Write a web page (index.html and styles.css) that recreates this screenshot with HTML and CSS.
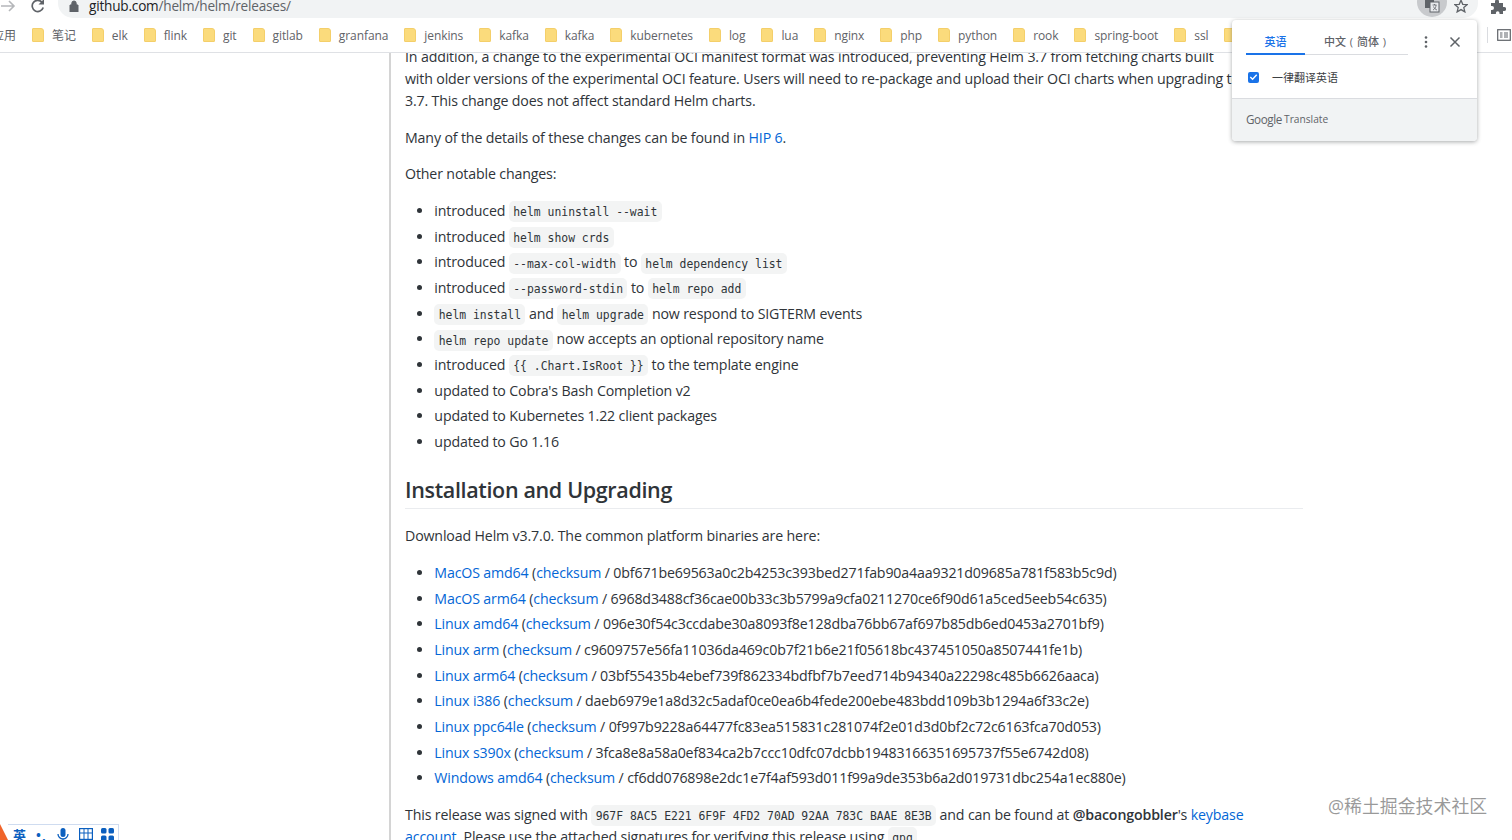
FILE: index.html
```html
<!DOCTYPE html>
<html lang="en">
<head>
<meta charset="utf-8">
<title>Releases · helm/helm</title>
<link rel="stylesheet" href="styles.css">
</head>
<body>
<header class="chrome">
  <div class="toolbar">
    <svg class="nav-back" width="16" height="16" viewBox="0 0 16 16"><path d="M1 8h13M9 3l5 5-5 5" fill="none" stroke="#b5b7ba" stroke-width="1.6"/></svg>
    <svg class="nav-reload" width="16" height="16" viewBox="0 0 16 16"><path d="M13.2 9.5A5.6 5.6 0 1 1 12 4.2" fill="none" stroke="#5f6368" stroke-width="1.7"/><path d="M14 1v5.5H8.500z" fill="#5f6368"/></svg>
    <div class="omnibox">
      <svg class="lock" width="10" height="12" viewBox="0 0 10 12"><path d="M1 5h8v7H1zM2.800 5V3.200a2.200 2.200 0 0 1 4.400 0V5" fill="#5f6368" stroke="#5f6368" stroke-width="1"/></svg>
      <span class="url"><b>github.com</b>/helm/helm/releases/</span>
      <span class="translate-btn">
        <svg width="16" height="16" viewBox="0 0 16 16"><rect x="1" y="1" width="9" height="10" fill="#5f6368"/><rect x="6" y="5" width="9" height="10" fill="#e8eaed" stroke="#5f6368"/><path d="M8.500 8h4M10.500 7v1M9 13c2 -1 3 -3 3 -5M9.500 9.500c.5 1.500 2 3 3.500 3.500" fill="none" stroke="#5f6368" stroke-width=".8"/></svg>
      </span>
      <svg class="star" width="14" height="14" viewBox="0 0 16 16"><path d="M8 1.500l2 4.600 5 .4-3.800 3.300 1.200 4.900L8 12.100l-4.400 2.600 1.200-4.900L1 6.500l5-.4z" fill="none" stroke="#5f6368" stroke-width="1.500"/></svg>
    </div>
    <svg class="puzzle" width="16" height="16" viewBox="0 0 16 16"><path d="M1 5h4V3.500a2 2 0 0 1 4 0V5h4v4h1.200a2 2 0 0 1 0 4H13v3H9.500v-1a1.800 1.800 0 0 0-3.600 0v1H1v-4h1a2 2 0 0 0 0-4H1z" fill="#5f6368"/></svg>
  </div>
  <nav class="bookmarks">
    <span class="apps">应用</span>
    <a class="bm"><i></i>笔记</a>
    <a class="bm"><i></i>elk</a>
    <a class="bm"><i></i>flink</a>
    <a class="bm"><i></i>git</a>
    <a class="bm"><i></i>gitlab</a>
    <a class="bm"><i></i>granfana</a>
    <a class="bm"><i></i>jenkins</a>
    <a class="bm"><i></i>kafka</a>
    <a class="bm"><i></i>kafka</a>
    <a class="bm"><i></i>kubernetes</a>
    <a class="bm"><i></i>log</a>
    <a class="bm"><i></i>lua</a>
    <a class="bm"><i></i>nginx</a>
    <a class="bm"><i></i>php</a>
    <a class="bm"><i></i>python</a>
    <a class="bm"><i></i>rook</a>
    <a class="bm"><i></i>spring-boot</a>
    <a class="bm"><i></i>ssl</a>
    <a class="bm"><i></i></a>
    <span class="bm-end">
      <span class="bm-sep"></span>
      <svg width="14" height="14" viewBox="0 0 14 14"><rect x=".7" y="1.700" width="12.600" height="10.600" fill="none" stroke="#5f6368" stroke-width="1.200"/><path d="M3 5h2.500M3 7h2.500M3 9h2.500M7 5h4M7 7h4M7 9h4" stroke="#5f6368"/></svg>
    </span>
  </nav>
</header>

<div class="page">
  <aside class="side"></aside>
  <main class="markdown">
    <p class="first">In addition, a change to the experimental OCI manifest format was introduced, preventing Helm 3.7 from fetching charts built<br>
    with older versions of the experimental OCI feature. Users will need to re-package and upload their OCI charts when upgrading to Helm<br>
    3.7. This change does not affect standard Helm charts.</p>
    <p>Many of the details of these changes can be found in <a href="#">HIP 6</a>.</p>
    <p>Other notable changes:</p>
    <ul>
      <li>introduced <code>helm uninstall --wait</code></li>
      <li>introduced <code>helm show crds</code></li>
      <li>introduced <code>--max-col-width</code> to <code>helm dependency list</code></li>
      <li>introduced <code>--password-stdin</code> to <code>helm repo add</code></li>
      <li><code>helm install</code> and <code>helm upgrade</code> now respond to SIGTERM events</li>
      <li><code>helm repo update</code> now accepts an optional repository name</li>
      <li>introduced <code>{{ .Chart.IsRoot }}</code> to the template engine</li>
      <li>updated to Cobra's Bash Completion v2</li>
      <li>updated to Kubernetes 1.22 client packages</li>
      <li>updated to Go 1.16</li>
    </ul>
    <h2>Installation and Upgrading</h2>
    <p>Download Helm v3.7.0. The common platform binaries are here:</p>
    <ul>
      <li><a href="#">MacOS amd64</a> (<a href="#">checksum</a> / 0bf671be69563a0c2b4253c393bed271fab90a4aa9321d09685a781f583b5c9d)</li>
      <li><a href="#">MacOS arm64</a> (<a href="#">checksum</a> / 6968d3488cf36cae00b33c3b5799a9cfa0211270ce6f90d61a5ced5eeb54c635)</li>
      <li><a href="#">Linux amd64</a> (<a href="#">checksum</a> / 096e30f54c3ccdabe30a8093f8e128dba76bb67af697b85db6ed0453a2701bf9)</li>
      <li><a href="#">Linux arm</a> (<a href="#">checksum</a> / c9609757e56fa11036da469c0b7f21b6e21f05618bc437451050a8507441fe1b)</li>
      <li><a href="#">Linux arm64</a> (<a href="#">checksum</a> / 03bf55435b4ebef739f862334bdfbf7b7eed714b94340a22298c485b6626aaca)</li>
      <li><a href="#">Linux i386</a> (<a href="#">checksum</a> / daeb6979e1a8d32c5adaf0ce0ea6b4fede200ebe483bdd109b3b1294a6f33c2e)</li>
      <li><a href="#">Linux ppc64le</a> (<a href="#">checksum</a> / 0f997b9228a64477fc83ea515831c281074f2e01d3d0bf2c72c6163fca70d053)</li>
      <li><a href="#">Linux s390x</a> (<a href="#">checksum</a> / 3fca8e8a58a0ef834ca2b7ccc10dfc07dcbb19483166351695737f55e6742d08)</li>
      <li><a href="#">Windows amd64</a> (<a href="#">checksum</a> / cf6dd076898e2dc1e7f4af593d011f99a9de353b6a2d019731dbc254a1ec880e)</li>
    </ul>
    <p>This release was signed with <code>967F 8AC5 E221 6F9F 4FD2 70AD 92AA 783C BAAE 8E3B</code> and can be found at <strong>@bacongobbler</strong>'s <a href="#">keybase</a><br>
    <a href="#">account</a>. Please use the attached signatures for verifying this release using <code>gpg</code>.</p>
  </main>
</div>

<section class="translate-pop">
  <div class="pop-head">
    <div class="pop-tabs">
      <span class="pop-tab active">英语</span>
      <span class="pop-tab">中文 ( 简体 )</span>
    </div>
    <svg class="pop-dots" width="4" height="14" viewBox="0 0 4 14"><circle cx="2" cy="2.500" r="1.300"/><circle cx="2" cy="7" r="1.300"/><circle cx="2" cy="11.500" r="1.300"/></svg>
    <svg class="pop-close" width="12" height="12" viewBox="0 0 12 12"><path d="M1.500 1.500l9 9M10.500 1.500l-9 9" stroke="#5f6368" stroke-width="1.500"/></svg>
  </div>
  <label class="pop-check">
    <span class="box"><svg width="12" height="12" viewBox="0 0 12 12"><path d="M2.500 6l2.500 2.500 4.500-5" fill="none" stroke="#fff" stroke-width="1.500"/></svg></span>
    <span>一律翻译英语</span>
  </label>
  <footer class="pop-foot"><span class="g">Google</span> <span>Translate</span></footer>
</section>

<div class="ime">
  <span class="ime-logo"></span>
  <span class="ime-bar">
    <span class="ime-en">英</span>
    <span class="ime-en ime-punct">•,</span>
    <svg width="12" height="14" viewBox="0 0 12 14"><rect x="3.500" y="0" width="5" height="9" rx="2.500" fill="#0b5fbf"/><path d="M1 6a5 5 0 0 0 10 0M6 11v3" fill="none" stroke="#0b5fbf" stroke-width="1.300"/></svg>
    <svg width="14" height="12" viewBox="0 0 14 12"><rect x=".6" y=".6" width="12.800" height="10.800" fill="none" stroke="#0b5fbf" stroke-width="1.200"/><path d="M5 1v10M9 1v10M1 5h12" stroke="#0b5fbf"/></svg>
    <svg width="13" height="13" viewBox="0 0 13 13"><rect width="5.500" height="5.500" rx="1.500" fill="#0b5fbf"/><rect x="7.500" width="5.500" height="5.500" rx="1.500" fill="#0b5fbf"/><rect y="7.500" width="5.500" height="5.500" rx="1.500" fill="#0b5fbf"/><rect x="7.500" y="7.500" width="5.500" height="5.500" rx="1.500" fill="#0b5fbf"/></svg>
  </span>
</div>

<div class="watermark">@稀土掘金技术社区</div>
</body>
</html>
```

FILE: styles.css
```css
* { box-sizing: border-box; }
html, body { height: 100%; }
body {
  margin: 0;
  overflow: hidden;
  background: #fff;
  color: #2f3439;
  font-family: "Open Sans", "Noto Sans CJK SC", sans-serif;
}

/* browser chrome */
.chrome {
  height: 53px;
  background: #fff;
  border-bottom: 1px solid #dfe1e5;
  position: relative;
  z-index: 2;
  overflow: hidden;
}
.toolbar {
  height: 18px;
  display: flex;
  align-items: flex-end;
  overflow: hidden;
}
.nav-back { margin: 0 0 4px 0; flex: none; }
.nav-reload { margin: 0 0 4px 14px; flex: none; }
.omnibox {
  flex: none;
  width: 1420px;
  height: 30px;
  margin-left: 12px;
  padding: 0 10px 0 11px;
  background: #f1f3f4;
  border-radius: 0 0 15px 15px;
  display: flex;
  align-items: flex-end;
}
.lock { margin-bottom: 6px; flex: none; }
.url {
  margin: 0 0 2px 10px;
  font-size: 13.6px;
  letter-spacing: -0.2px;
  line-height: 20px;
  color: #5f6368;
  flex: 1;
  white-space: nowrap;
}
.url b { font-weight: 400; color: #202124; }
.translate-btn {
  flex: none;
  width: 30px;
  height: 30px;
  margin-bottom: 1px;
  border-radius: 50%;
  background: #c8cacd;
  display: flex;
  align-items: flex-end;
  justify-content: center;
  padding-bottom: 4px;
}
.star { margin: 0 0 5px 7px; flex: none; }
.puzzle { margin: 0 0 4px 12px; flex: none; }

.bookmarks {
  height: 34px;
  display: flex;
  align-items: center;
  font-size: 12px;
  letter-spacing: -0.09px;
  color: #5f6368;
  white-space: nowrap;
  position: relative;
}
.apps { width: 32px; flex: none; text-indent: -8px; }
.bm { display: inline-flex; align-items: center; flex: none; margin-right: 16px; }
.bm i {
  width: 12px;
  height: 14px;
  margin-right: 8px;
  background: #fbdb7c;
  border: 1px solid #f4cf6a;
  border-radius: 1px 3px 1px 1px;
}
.bm-end {
  position: absolute;
  right: 0;
  top: 0;
  height: 34px;
  width: 25px;
  background: #fff;
  display: flex;
  align-items: center;
  gap: 9px;
}
.bm-sep { width: 1px; height: 16px; background: #dadce0; flex: none; }

/* page */
.page { display: flex; height: 787px; overflow: hidden; }
.side { flex: none; width: 391px; border-right: 2px solid #d4d4d4; }
.markdown {
  flex: none;
  width: 898px;
  margin: -7px 0 0 14px;
  font-size: 14.2px;
  line-height: 22px;
  letter-spacing: -0.15px;
  white-space: nowrap;
}
.markdown p { margin: 0 0 14.67px; }
.markdown a { color: #0366d6; text-decoration: none; }
.markdown strong { font-weight: 600; }
.markdown ul { margin: 0 0 14.67px; padding-left: 29.33px; }
.markdown li + li { margin-top: 3.67px; }
.markdown h2 {
  margin: 23px 0 16px;
  padding-bottom: 5px;
  border-bottom: 1px solid #eaecef;
  font-size: 21.5px;
  line-height: 27.5px;
  font-weight: 600;
  letter-spacing: -0.35px;
}
.markdown code {
  font-family: "DejaVu Sans Mono", "Liberation Mono", monospace;
  font-size: 11.4px;
  line-height: 1;
  letter-spacing: 0;
  padding: 3.5px 4.4px;
  background: rgba(27, 31, 35, 0.05);
  border-radius: 5px;
}

/* translate popup */
.translate-pop {
  position: absolute;
  left: 1232px;
  top: 20px;
  width: 245px;
  height: 121px;
  background: #fff;
  border-radius: 4px;
  box-shadow: 0 1px 4px rgba(60, 64, 67, 0.45);
  z-index: 3;
  display: flex;
  flex-direction: column;
  overflow: hidden;
}
.pop-head { display: flex; align-items: flex-start; padding: 14px 0 0 14px; height: 36px; flex: none; }
.pop-tabs { display: flex; width: 162px; height: 21px; border-bottom: 1px solid #dadce0; font-size: 11px; font-weight: 500; color: #5f6368; }
.pop-tab { text-align: center; line-height: 15px; width: 100px; white-space: nowrap; word-spacing: 1px; }
.pop-tab.active { width: 59px; color: #1a73e8; border-bottom: 2px solid #1a73e8; height: 21px; }
.pop-dots { fill: #5f6368; margin: 1px 0 0 16px; flex: none; }
.pop-close { margin: 2px 0 0 21px; flex: none; }
.pop-check {
  flex: 1;
  display: flex;
  align-items: center;
  padding: 0 0 0 16px;
  font-size: 11px;
  color: #3c4043;
}
.box {
  width: 11px;
  height: 11px;
  margin-right: 13px;
  background: #1a73e8;
  border-radius: 2px;
  display: flex;
  align-items: center;
  justify-content: center;
  flex: none;
}
.pop-foot {
  height: 43px;
  flex: none;
  display: flex;
  align-items: center;
  gap: 2px;
  padding: 0 0 2px 14px;
  background: #f1f3f4;
  border-top: 1px solid #dadce0;
  font-size: 10.2px;
  color: #5f6368;
}
.pop-foot .g { font-size: 11.7px; letter-spacing: -0.4px; }

/* IME bar */
.ime {
  position: absolute;
  left: 0;
  bottom: 0;
  height: 16px;
  display: flex;
  z-index: 3;
}
.ime-logo {
  width: 8px;
  height: 16px;
  background: #f0642a;
  clip-path: polygon(0 0, 100% 100%, 0 100%);
}
.ime-bar {
  width: 111px;
  background: #fff;
  border: 1px solid #cfdcf0;
  border-bottom: 0;
  border-left: 0;
  display: flex;
  align-items: flex-start;
  gap: 10px;
  padding: 3px 0 0 5px;
  overflow: hidden;
}
.ime-en { font-size: 13px; line-height: 14px; font-weight: 700; color: #0b5fbf; }
.ime-punct { width: 11px; letter-spacing: 1px; white-space: nowrap; }
.ime-bar svg:last-child { margin-left: -2px; }

.watermark {
  position: absolute;
  left: 1328px;
  top: 794px;
  font-size: 17.9px;
  line-height: 24px;
  color: rgba(120, 120, 120, 0.75);
  z-index: 3;
  white-space: nowrap;
}
```
